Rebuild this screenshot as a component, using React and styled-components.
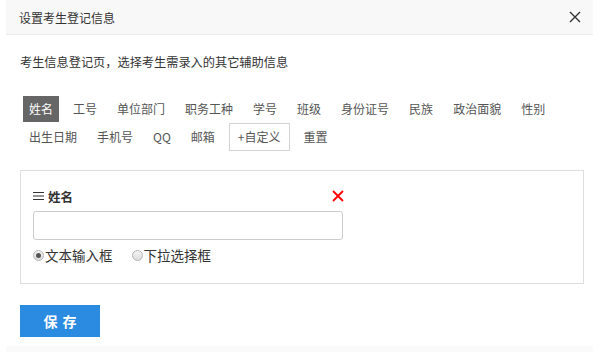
import React, { useState } from 'react';
import styled, { createGlobalStyle } from 'styled-components';

const GlobalStyle = createGlobalStyle`
  html, body {
    margin: 0;
    padding: 0;
    background: #ffffff;
  }
  body {
    font-family: "Noto Sans CJK SC", "Noto Sans", "Liberation Sans", sans-serif;
    color: #333;
  }
`;

const Dialog = styled.div`
  margin: 0 7px 0 6px;
  height: 352px;
  display: flex;
  flex-direction: column;
  background: #fff;
`;

const Header = styled.div`
  height: 35px;
  flex: none;
  display: flex;
  align-items: center;
  justify-content: space-between;
  padding: 0 12px 0 13px;
  background: #f8f8f8;
  border-bottom: 1px solid #ececec;
  box-sizing: border-box;
`;

const Title = styled.div`
  font-size: 12px;
  color: #333;
`;

const CloseButton = styled.button`
  border: none;
  background: none;
  padding: 0;
  width: 12px;
  height: 12px;
  display: flex;
  cursor: pointer;
`;

const Body = styled.div`
  flex: 1;
  padding: 18px 9px 0 14px;
`;

const Desc = styled.div`
  font-size: 12.2px;
  line-height: 18px;
  color: #333;
`;

const Tabs = styled.div`
  display: flex;
  flex-wrap: wrap;
  align-items: center;
  row-gap: 1px;
  margin: 25px 0 0 3px;
`;

const Tab = styled.span`
  height: 26px;
  line-height: 26px;
  padding: 0 6px;
  margin-right: 8px;
  font-size: 12px;
  color: ${(p) => (p.$active ? '#fff' : '#555')};
  background: ${(p) => (p.$active ? '#666' : 'transparent')};
  box-sizing: border-box;
  cursor: pointer;
  white-space: nowrap;
`;

const AddTab = styled(Tab)`
  height: 28px;
  padding: 0 8px;
  border: 1px solid #d4d4d4;
`;

const Card = styled.div`
  margin-top: 19px;
  border: 1px solid #dddddd;
  padding: 17px 12px 12px 12px;
  height: 114px;
  box-sizing: border-box;
`;

const FieldHead = styled.div`
  width: 310px;
  display: flex;
  align-items: center;
  justify-content: space-between;
  height: 16px;
`;

const FieldName = styled.div`
  display: flex;
  align-items: center;
  gap: 4px;
  font-size: 12.5px;
  font-weight: bold;
  color: #333;
`;

const RemoveIcon = styled.span`
  display: flex;
  margin-right: -1px;
`;

const TextInput = styled.input`
  display: block;
  margin-top: 7px;
  width: 310px;
  height: 29px;
  border: 1px solid #cccccc;
  border-radius: 3px;
  box-sizing: border-box;
  outline: none;
  padding: 0 6px;
`;

const RadioRow = styled.div`
  display: flex;
  align-items: center;
  margin-top: 5px;
  gap: 19px;
`;

const RadioLabel = styled.label`
  display: flex;
  align-items: center;
  font-size: 13.5px;
  color: #333;
  cursor: pointer;
`;

const RadioDot = styled.span`
  width: 11px;
  height: 11px;
  border-radius: 50%;
  border: 1px solid #b5b5b5;
  background: linear-gradient(#f4f4f4, #dcdcdc);
  box-sizing: border-box;
  display: flex;
  align-items: center;
  justify-content: center;
  margin-right: 1px;
  &::after {
    content: '';
    width: 5px;
    height: 5px;
    border-radius: 50%;
    background: ${(p) => (p.$checked ? '#555' : 'transparent')};
  }
`;

const SaveButton = styled.button`
  margin-top: 21px;
  width: 80px;
  height: 32px;
  border: none;
  background: #2a8be0;
  color: #fff;
  font-family: inherit;
  font-size: 14px;
  font-weight: bold;
  letter-spacing: 5px;
  text-indent: 5px;
  cursor: pointer;
`;

const Footer = styled.div`
  height: 6px;
  flex: none;
  background: #fafafa;
`;

const TABS = [
  '姓名', '工号', '单位部门', '职务工种', '学号', '班级', '身份证号', '民族',
  '政治面貌', '性别', '出生日期', '手机号', 'QQ', '邮箱',
];

const MenuIcon = () => (
  <svg width="11" height="10" viewBox="0 0 11 10">
    <path d="M0 1.5h11M0 5h11M0 8.5h11" stroke="#333" strokeWidth="1" />
  </svg>
);

export default function App() {
  const [mode, setMode] = useState('text');

  return (
    <>
      <GlobalStyle />
      <Dialog>
        <Header>
          <Title>设置考生登记信息</Title>
          <CloseButton aria-label="关闭">
            <svg width="12" height="12" viewBox="0 0 12 12">
              <path d="M1 1L11 11M11 1L1 11" stroke="#333" strokeWidth="1.4" />
            </svg>
          </CloseButton>
        </Header>
        <Body>
          <Desc>考生信息登记页，选择考生需录入的其它辅助信息</Desc>
          <Tabs>
            {TABS.map((t, i) => (
              <Tab key={t} $active={i === 0}>{t}</Tab>
            ))}
            <AddTab>+自定义</AddTab>
            <Tab>重置</Tab>
          </Tabs>
          <Card>
            <FieldHead>
              <FieldName>
                <MenuIcon />
                姓名
              </FieldName>
              <RemoveIcon>
                <svg width="12" height="12" viewBox="0 0 12 12">
                  <path d="M1 1L11 11M11 1L1 11" stroke="#f00" strokeWidth="1.8" />
                </svg>
              </RemoveIcon>
            </FieldHead>
            <TextInput />
            <RadioRow>
              <RadioLabel onClick={() => setMode('text')}>
                <RadioDot $checked={mode === 'text'} />
                文本输入框
              </RadioLabel>
              <RadioLabel onClick={() => setMode('select')}>
                <RadioDot $checked={mode === 'select'} />
                下拉选择框
              </RadioLabel>
            </RadioRow>
          </Card>
          <SaveButton>保存</SaveButton>
        </Body>
        <Footer />
      </Dialog>
    </>
  );
}
